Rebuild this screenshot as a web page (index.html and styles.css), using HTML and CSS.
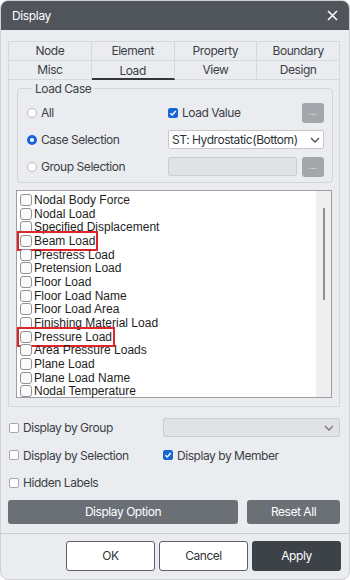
FILE: index.html
```html
<!DOCTYPE html>
<html>
<head>
<meta charset="utf-8">
<link rel="stylesheet" href="styles.css">
</head>
<body>
<div class="dialog">
  <div class="titlebar">
    <span class="title">Display</span>
    <svg class="close" width="11" height="11" viewBox="0 0 11 11"><path d="M1 1L10 10M10 1L1 10" stroke="#ffffff" stroke-width="1.5" fill="none"/></svg>
  </div>
  <div class="content">
    <div class="tabs">
      <div class="tab">Node</div>
      <div class="tab">Element</div>
      <div class="tab">Property</div>
      <div class="tab">Boundary</div>
      <div class="tab">Misc</div>
      <div class="tab active">Load</div>
      <div class="tab">View</div>
      <div class="tab">Design</div>
    </div>
    <div class="panel">
      <fieldset class="group">
        <legend>Load Case</legend>
        <div class="group-grid">
          <label class="opt"><span class="radio"></span>All</label>
          <label class="opt"><span class="check on"><svg width="8" height="8" viewBox="0 0 8 8"><path d="M1.3 4.2L3.2 6L6.8 2" stroke="#fff" stroke-width="1.5" fill="none"/></svg></span>Load Value</label>
          <div class="dots">...</div>
          <label class="opt"><span class="radio on"></span>Case Selection</label>
          <div class="select span2">ST: Hydrostatic(Bottom)<svg class="chev" width="10" height="6" viewBox="0 0 10 6"><path d="M1 1L5 5L9 1" stroke="#555" stroke-width="1.4" fill="none"/></svg></div>
          <label class="opt"><span class="radio"></span>Group Selection</label>
          <div class="input"></div>
          <div class="dots">...</div>
        </div>
      </fieldset>
      <div class="list">
        <div class="items">
          <div class="item"><span class="box"></span>Nodal Body Force</div>
          <div class="item"><span class="box"></span>Nodal Load</div>
          <div class="item"><span class="box"></span>Specified Displacement</div>
          <div class="item"><span class="mark"><span class="box"></span>Beam Load</span></div>
          <div class="item"><span class="box"></span>Prestress Load</div>
          <div class="item"><span class="box"></span>Pretension Load</div>
          <div class="item"><span class="box"></span>Floor Load</div>
          <div class="item"><span class="box"></span>Floor Load Name</div>
          <div class="item"><span class="box"></span>Floor Load Area</div>
          <div class="item"><span class="box"></span>Finishing Material Load</div>
          <div class="item"><span class="mark"><span class="box"></span>Pressure Load</span></div>
          <div class="item"><span class="box"></span>Area Pressure Loads</div>
          <div class="item"><span class="box"></span>Plane Load</div>
          <div class="item"><span class="box"></span>Plane Load Name</div>
          <div class="item"><span class="box"></span>Nodal Temperature</div>
        </div>
        <div class="scroll"><div class="thumb"></div></div>
      </div>
    </div>
    <div class="options">
      <label class="opt"><span class="check"></span>Display by Group</label>
      <div class="select gray"><svg class="chev" width="10" height="6" viewBox="0 0 10 6"><path d="M1 1L5 5L9 1" stroke="#777" stroke-width="1.4" fill="none"/></svg></div>
      <label class="opt"><span class="check"></span>Display by Selection</label>
      <label class="opt"><span class="check on"><svg width="8" height="8" viewBox="0 0 8 8"><path d="M1.3 4.2L3.2 6L6.8 2" stroke="#fff" stroke-width="1.5" fill="none"/></svg></span>Display by Member</label>
      <label class="opt"><span class="check"></span>Hidden Labels</label>
    </div>
    <div class="actions">
      <div class="btn gray wide">Display Option</div>
      <div class="btn gray reset">Reset All</div>
    </div>
    <div class="sep"></div>
    <div class="footer">
      <div class="btn light">OK</div>
      <div class="btn light">Cancel</div>
      <div class="btn dark">Apply</div>
    </div>
  </div>
</div>
</body>
</html>
```

FILE: styles.css
```css
* { box-sizing: border-box; }
html, body { margin: 0; padding: 0; background: #ffffff; }
body { font-family: Inter, "Noto Sans", sans-serif; font-size: 12px; letter-spacing: -0.45px; color: #3a3e45; }

.dialog {
  width: 350px;
  height: 580px;
  background: #ebecf0;
  border: 1px solid #cfd1d5;
  border-radius: 8px;
  overflow: hidden;
  display: flex;
  flex-direction: column;
}

.titlebar {
  height: 29px;
  flex: none;
  background: #50555c;
  display: flex;
  align-items: center;
  justify-content: space-between;
  padding: 0 11px 0 11px;
}
.title { color: #ffffff; font-size: 12px; letter-spacing: -0.35px; }
.close { display: block; }

.content { padding: 0 9px 0 7px; display: flex; flex-direction: column; }

.tabs {
  margin-top: 11px;
  display: grid;
  grid-template-columns: repeat(4, 1fr);
  border-top: 1px solid #d6d8dc;
  border-left: 1px solid #d6d8dc;
}
.tab {
  height: 19px;
  line-height: 18px;
  text-align: center;
  border-right: 1px solid #d6d8dc;
  border-bottom: 1px solid #d6d8dc;
  color: #3a3e45;
}
.tab.active { border-bottom: 2px solid #33363b; line-height: 19px; }

.panel {
  border: 1px solid #d6d8dc;
  border-top: none;
  height: 327px;
  padding: 1px 7px 0 7px;
}

.group {
  margin: 0 -1px 0 1px;
  padding: 3px 8px 2px 9px;
  border: 1px solid #d2d4d8;
  border-radius: 4px;
  min-width: 0;
}
.group legend {
  padding: 0 3px;
  margin-left: 5px;
  line-height: 15px;
  color: #3a3e45;
}
.group-grid {
  display: grid;
  grid-template-columns: 136px 1fr 22px;
  grid-auto-rows: 27px;
  align-items: center;
  column-gap: 5px;
}
.group-grid .span2 { grid-column: 2 / 4; }

.opt { display: flex; align-items: center; gap: 4px; color: #3a3e45; white-space: nowrap; }

.radio {
  width: 10px; height: 10px;
  border-radius: 50%;
  background: #fff;
  border: 1px solid #b9bcc1;
  flex: none;
}
.radio.on { border: 3px solid #1766d6; }

.check {
  width: 10px; height: 10px;
  border-radius: 2px;
  background: #fff;
  border: 1px solid #a5a8ad;
  flex: none;
  display: flex; align-items: center; justify-content: center;
}
.check.on { background: #1766d6; border-color: #1766d6; }
.check svg { display: block; }

.dots {
  height: 20px;
  background: #a3a6ab;
  border-radius: 3px;
  color: #e8e9eb;
  font-size: 9px;
  letter-spacing: 0;
  text-align: center;
  line-height: 18px;
}

.select {
  height: 19px;
  background: #fff;
  border: 1px solid #c4c7cc;
  border-radius: 2px;
  display: flex;
  align-items: center;
  justify-content: space-between;
  padding: 0 3px 0 3px;
  color: #2f3338;
}
.select.gray { background: #e1e2e6; border-color: #c9cbd0; justify-content: flex-end; padding-right: 5px; }
.chev { display: block; }

.input {
  height: 19px;
  background: #e1e2e6;
  border: 1px solid #cbcdd2;
  border-radius: 2px;
}

.list {
  margin-top: 7px;
  height: 208px;
  border: 1px solid #9c9ea2;
  background: #ffffff;
  display: flex;
}
.items { flex: 1; padding: 2px 0 0 3px; }
.item {
  height: 13.7px;
  display: flex;
  align-items: center;
  font-family: "Liberation Sans", Arial, sans-serif;
  font-size: 12px;
  letter-spacing: 0;
  color: #1e1e1e;
  white-space: nowrap;
}
.box {
  width: 12px; height: 12px;
  border: 1px solid #8f9296;
  border-radius: 3px;
  background: #fafafa;
  margin-right: 2px;
  flex: none;
}
.mark {
  display: inline-flex;
  align-items: center;
  outline: 2px solid #e0242a;
  outline-offset: 1px;
  padding-right: 0;
}
.scroll {
  width: 15px;
  background: #efefef;
  display: flex;
  justify-content: center;
  padding-top: 17px;
}
.thumb { width: 2px; height: 92px; background: #8e9094; }

.options {
  margin-top: 7px;
  display: grid;
  grid-template-columns: 154px 1fr;
  grid-auto-rows: 27.5px;
  align-items: center;
  padding-left: 1px;
}

.actions { margin-top: 3px; display: flex; gap: 9px; }
.btn {
  height: 24px;
  border-radius: 3px;
  display: flex;
  align-items: center;
  justify-content: center;
}
.btn.gray { background: #6b7077; color: #ffffff; }
.btn.wide { width: 230px; }
.btn.reset { width: 93px; }

.sep { margin-top: 9px; height: 1px; background: #c9ccd1; margin-left: -7px; margin-right: -9px; }

.footer { margin-top: 7px; display: flex; justify-content: flex-end; gap: 4px; margin-right: -1px; }
.footer .btn { width: 89px; height: 30px; }
.btn.light { background: #ffffff; border: 1px solid #5c6066; color: #2f3338; }
.btn.dark { background: #3d4248; color: #ffffff; }
```
